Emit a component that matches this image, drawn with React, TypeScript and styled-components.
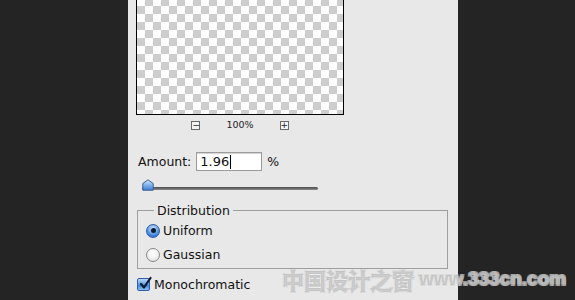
import React from "react";
import styled, { createGlobalStyle } from "styled-components";

const Global = createGlobalStyle`
  html, body { margin: 0; padding: 0; background: #242424; }
  body { width: 575px; height: 300px; overflow: hidden; font-family: "DejaVu Sans", "Liberation Sans", sans-serif; }
`;

const Screen = styled.div`
  position: relative;
  width: 575px;
  height: 300px;
  display: flex;
  background: #242424;
`;

const Panel = styled.div`
  margin-left: 128px;
  width: 330px;
  height: 300px;
  background: #e8e8e8;
  padding-left: 8px;
  box-sizing: border-box;
  display: flex;
  flex-direction: column;
  color: #111;
  font-size: 12.5px;
`;

const Preview = styled.div`
  width: 208px;
  height: 115px;
  box-sizing: border-box;
  border: 1.5px solid #000;
  border-top: none;
  background-color: #fff;
  background-image:
    linear-gradient(45deg, #cdcdcd 25%, transparent 25%, transparent 75%, #cdcdcd 75%),
    linear-gradient(45deg, #cdcdcd 25%, transparent 25%, transparent 75%, #cdcdcd 75%);
  background-size: 16px 16px;
  background-position: 0 -2px, 8px 6px;
`;

const ZoomRow = styled.div`
  width: 208px;
  display: flex;
  justify-content: center;
  align-items: center;
  margin-top: 6px;
  height: 9px;
`;

const ZoomBtn = styled.div`
  width: 9px;
  height: 9px;
  box-sizing: border-box;
  border: 1px solid #6a6a6a;
  background: #f4f4f4;
  font-size: 9px;
  line-height: 7px;
  text-align: center;
  color: #222;
`;

const ZoomLabel = styled.div<{ $gap: number }>`
  font-size: 9.5px;
  margin: 0 ${(p) => p.$gap}px;
  line-height: 9px;
  position: relative;
  top: -1px;
  color: #222;
`;

const AmountRow = styled.div`
  display: flex;
  align-items: center;
  margin-top: 22px;
  height: 19px;
  padding-left: 2px;
`;

const Input = styled.div`
  width: 66px;
  height: 19px;
  box-sizing: border-box;
  margin-left: 5px;
  border: 1px solid #9c9c9c;
  box-shadow: inset 0 1px 1px rgba(0, 0, 0, 0.18);
  background: #fff;
  padding-left: 3px;
  display: flex;
  align-items: center;
  font-size: 13px;
`;

const Caret = styled.span`
  display: inline-block;
  width: 1px;
  height: 14px;
  background: #000;
  margin-left: 1px;
`;

const Percent = styled.span`
  margin-left: 5px;
  font-size: 12.5px;
`;

const SliderRow = styled.div`
  position: relative;
  margin-top: 8px;
  margin-left: 6px;
  width: 176px;
  height: 12px;
  display: flex;
  align-items: center;
`;

const Track = styled.div`
  position: relative;
  top: 3px;
  flex: 1;
  height: 3px;
  border-radius: 2px;
  background: linear-gradient(#4a4a4a, #8a8a8a);
`;

const Thumb = styled.svg`
  position: absolute;
  left: 0;
  top: 0;
`;

const Fieldset = styled.fieldset`
  margin: 12px 0 0 1px;
  padding: 4px 0 5px 8px;
  width: 311px;
  height: 66px;
  box-sizing: border-box;
  border: 1px solid #9e9e9e;
  display: flex;
  flex-direction: column;
  gap: 7px;
`;

const Legend = styled.legend`
  padding: 0 3px;
  margin-left: 8px;
  font-size: 12.5px;
  color: #111;
`;

const Option = styled.div`
  display: flex;
  align-items: center;
  height: 17px;
  gap: 3px;
  font-size: 12.5px;
`;

const Radio = styled.div<{ $on?: boolean }>`
  width: 14px;
  height: 14px;
  border-radius: 50%;
  box-sizing: border-box;
  display: flex;
  align-items: center;
  justify-content: center;
  border: 1px solid ${(p) => (p.$on ? "#2d5ea8" : "#8a8a8a")};
  background: ${(p) =>
    p.$on
      ? "radial-gradient(circle at 50% 30%, #cfe5fb 0%, #6fa8e8 45%, #2f77d4 75%, #6fb2f0 100%)"
      : "radial-gradient(circle at 50% 35%, #ffffff 0%, #f2f2f2 50%, #d4d4d4 100%)"};
  &::after {
    content: "";
    display: ${(p) => (p.$on ? "block" : "none")};
    width: 5px;
    height: 5px;
    border-radius: 50%;
    background: #0c1a33;
  }
`;

const CheckRow = styled.div`
  display: flex;
  align-items: center;
  gap: 4px;
  margin-top: 8px;
  margin-left: 1px;
  font-size: 12.5px;
`;

const CheckBox = styled.div`
  width: 13px;
  height: 13px;
  box-sizing: border-box;
  border: 1px solid #2d5ea8;
  border-radius: 2px;
  background: linear-gradient(#bcd8f7, #5f9ce6 50%, #3a7fd8 55%, #8cc0f3);
  position: relative;
`;

const Tick = styled.svg`
  position: absolute;
  left: 0px;
  top: -3px;
`;

const Watermark = styled.div`
  position: absolute;
  left: 282px;
  top: 267px;
  display: flex;
  align-items: center;
  gap: 5px;
  font-weight: 900;
  color: rgba(175, 175, 175, 0.6);
  -webkit-text-stroke: 2px rgba(170, 170, 170, 0.55);
  paint-order: stroke fill;
  text-shadow: 1px 1px 0 rgba(255, 255, 255, 0.35), -1px -1px 0 rgba(255, 255, 255, 0.35), 1px -1px 0 rgba(255, 255, 255, 0.3), -1px 1px 0 rgba(255, 255, 255, 0.3);
  pointer-events: none;
`;

const WmCn = styled.span`
  font-family: "Noto Sans CJK SC", sans-serif;
  font-size: 22px;
  letter-spacing: 0px;
  line-height: 24px;
`;

const WmUrl = styled.span`
  font-family: "Liberation Sans", Arial, sans-serif;
  font-size: 19px;
  line-height: 24px;
`;

export default function App() {
  return (
    <Screen>
      <Global />
      <Panel>
        <Preview />
        <ZoomRow>
          <ZoomBtn>−</ZoomBtn>
          <ZoomLabel $gap={26}>100%</ZoomLabel>
          <ZoomBtn>+</ZoomBtn>
        </ZoomRow>
        <AmountRow>
          <span>Amount:</span>
          <Input>
            1.96
            <Caret />
          </Input>
          <Percent>%</Percent>
        </AmountRow>
        <SliderRow>
          <Track />
          <Thumb width="12" height="12" viewBox="0 0 12 12">
            <defs>
              <linearGradient id="th" x1="0" y1="0" x2="0" y2="1">
                <stop offset="0" stopColor="#d6e8fb" />
                <stop offset="0.5" stopColor="#7fb3ec" />
                <stop offset="1" stopColor="#3b7fd6" />
              </linearGradient>
            </defs>
            <path d="M6 0.8 L11.2 4.5 L11.2 11.2 L0.8 11.2 L0.8 4.5 Z" fill="url(#th)" stroke="#3a5f94" strokeWidth="1" />
          </Thumb>
        </SliderRow>
        <Fieldset>
          <Legend>Distribution</Legend>
          <Option>
            <Radio $on />
            <span>Uniform</span>
          </Option>
          <Option>
            <Radio />
            <span>Gaussian</span>
          </Option>
        </Fieldset>
        <CheckRow>
          <CheckBox>
            <Tick width="15" height="15" viewBox="0 0 15 15">
              <path d="M3 8 L6 11.5 L12.5 2" fill="none" stroke="#0d1a30" strokeWidth="2.2" strokeLinecap="round" strokeLinejoin="round" />
            </Tick>
          </CheckBox>
          <span>Monochromatic</span>
        </CheckRow>
      </Panel>
      <Watermark>
        <WmCn>中国设计之窗</WmCn>
        <WmUrl>www.333cn.com</WmUrl>
      </Watermark>
    </Screen>
  );
}
